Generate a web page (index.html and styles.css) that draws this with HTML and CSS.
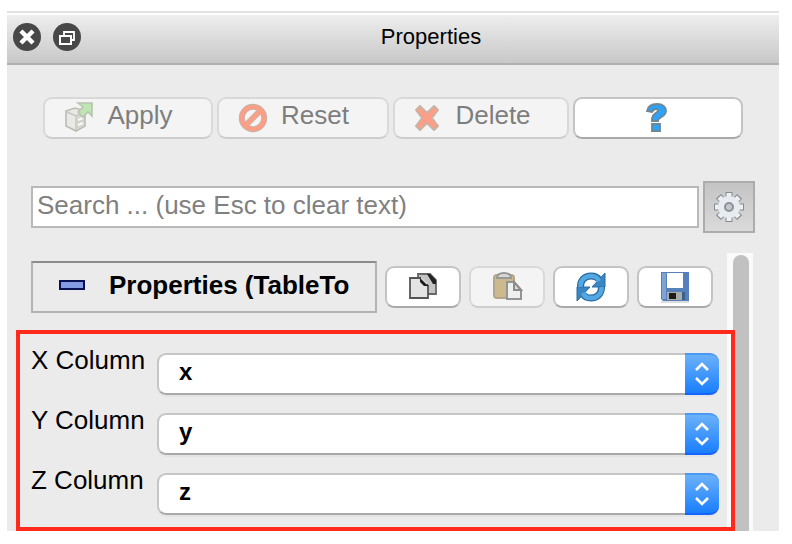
FILE: index.html
```html
<!DOCTYPE html>
<html lang="en">
<head>
<meta charset="utf-8">
<title>Properties</title>
<link rel="stylesheet" href="styles.css">
</head>
<body>
<main class="panel">
  <header class="titlebar">
    <button class="round" type="button" aria-label="Close">
      <svg width="28" height="28" viewBox="0 0 28 28"><circle cx="14" cy="14" r="14" fill="#484848"/><path d="M9.500 9.500l9 9M18.500 9.500l-9 9" stroke="#fff" stroke-width="4.400" stroke-linecap="square"/></svg>
    </button>
    <button class="round" type="button" aria-label="Detach">
      <svg width="28" height="28" viewBox="0 0 28 28" fill="none" stroke="#fff"><circle cx="14" cy="14" r="14" fill="#484848" stroke="none"/><path d="M11 12V9h10v8h-3" stroke-width="1.800"/><path d="M7 13h11v8H7z" stroke-width="2"/></svg>
    </button>
    <h1 class="title">Properties</h1>
  </header>

  <div class="actions">
    <button class="button action" type="button" disabled>
      <svg width="32" height="32" viewBox="0 0 32 32"><path d="M3 10l9-3 10 3v15l-9 5-10-5z" fill="#e9e9e5" stroke="#bbbcb4" stroke-width="1.600"/><path d="M4 11l9 4 9-4M13 15v14" fill="none" stroke="#c5c6be" stroke-width="1.500"/><path d="M14 16l7-4v12l-7 4z" fill="#d2d3cc"/><path d="M15 19l5-2M15 24l5-2" stroke="#fafaf7" stroke-width="2"/><path d="M15 2h14v13l-4-4-5 5-5-5 5-5z" fill="#bfe6b0" stroke="#b9c4b2" stroke-width="1.600"/></svg>
      <span class="label">Apply</span>
    </button>
    <button class="button action" type="button" disabled>
      <svg width="32" height="32" viewBox="0 0 32 32" fill="none"><circle cx="16" cy="17" r="11.200" stroke="#c9b2a2" stroke-width="6"/><path d="M9 24L23 10" stroke="#c9b2a2" stroke-width="6"/><circle cx="16" cy="17" r="11.200" stroke="#ff9d87" stroke-width="3.800"/><path d="M9 24L23 10" stroke="#ff9d87" stroke-width="3.800"/></svg>
      <span class="label">Reset</span>
    </button>
    <button class="button action" type="button" disabled>
      <svg width="32" height="32" viewBox="0 0 32 32"><path d="M5 9l4-4 7 7 7-7 4 4-6 8 6 8-4 4-7-7-7 7-4-4 6-8z" fill="#ff9d87" stroke="#c8b4a5" stroke-width="2" stroke-linejoin="round"/></svg>
      <span class="label">Delete</span>
    </button>
    <button class="button action" type="button" aria-label="Help">
      <svg width="32" height="32" viewBox="0 0 32 32"><path d="M7 10C8 5 11 3 17 3c6 0 9 3 9 7 0 4-3 5-6 7-1 1-2 1-2 3h-6v-3c0-3 3-4 5-6 2-1 1-3-1-3s-3 1-4 3z" fill="#2ba3fa" stroke="#6e8793" stroke-width="1.800"/><path d="M12 23h8v7h-8z" fill="#2ba3fa" stroke="#6e8793" stroke-width="1.800"/></svg>
    </button>
  </div>

  <div class="search">
    <input class="search-box" type="text" aria-label="Search" placeholder="Search ... (use Esc to clear text)">
    <button class="gear" type="button" aria-label="Advanced properties">
      <svg width="34" height="34" viewBox="0 0 34 34"><g stroke="#858b91" stroke-width="7"><path d="M17 2v30M2 17h30M6.400 6.400l21.200 21.200M27.600 6.400L6.400 27.600"/></g><g stroke="#edf0f4" stroke-width="5"><path d="M17 3v28M3 17h28M7.200 7.200l19.600 19.600M26.800 7.200L7.200 26.800"/></g><circle cx="17" cy="17" r="11" fill="#e8ecf1"/><circle cx="17" cy="17" r="4" fill="#c4c7ca" stroke="#8b9198" stroke-width="2"/></svg>
    </button>
  </div>

  <div class="scroll-area">
    <div class="content">
      <div class="group">
        <button class="group-toggle" type="button" aria-expanded="true">
          <svg width="26" height="10" viewBox="0 0 26 10"><path d="M1 1h24v8H1z" fill="#849be4" stroke="#0a1050" stroke-width="2"/></svg>
          <span class="group-name">Properties (TableTo</span>
        </button>
        <button class="button tool" type="button" aria-label="Copy">
          <svg width="32" height="32" viewBox="0 0 32 32"><path d="M11 3h12l6 6v14H11z" fill="#c4c4c4" stroke="#666" stroke-width="1.800"/><path d="M20 3h3l6 6v4h-3z" fill="#222"/><path d="M3 7h10l8 8v12H3z" fill="#e4e4e4" stroke="#555" stroke-width="1.800"/><path d="M13 6l9 9h-5l-4-4z" fill="#1c1c1c"/><path d="M14 7l6 6" stroke="#ddd" stroke-width="1.200"/></svg>
        </button>
        <button class="button tool" type="button" aria-label="Paste" disabled>
          <svg width="32" height="32" viewBox="0 0 32 32"><rect x="3" y="4" width="20" height="23" rx="3" fill="#cdb98e" stroke="#b5a68b" stroke-width="2"/><path d="M6 7c0-4 3-5 7-5s7 1 7 5z" fill="#d8d8d8" stroke="#989898" stroke-width="2"/><path d="M16 11h7l7 8v9H16z" fill="#efefef" stroke="#949494" stroke-width="2"/><path d="M23 11v8h7z" fill="#ddd" stroke="#8c8c8c" stroke-width="2"/></svg>
        </button>
        <button class="button tool" type="button" aria-label="Restore defaults">
          <svg width="32" height="32" viewBox="0 0 32 32"><g fill="none" stroke="#2c6b9f" stroke-width="7"><path d="M5.500 17C5 9 10 5 16 5c4 0 7 2 8 4"/><path d="M26.500 15c.5 8-4.500 12-10.500 12-4 0-7-2-8-4"/></g><path d="M30 2v14H17zM2 30V16h13z" fill="#3a86c4" stroke="#2c6b9f"/><g fill="none" stroke="#51a8e2" stroke-width="4.500"><path d="M5.500 16C5 9 10 5 16 5c4 0 7 2 8 5"/><path d="M26.500 16c.5 7-4.500 11-10.500 11-4 0-7-2-8-5"/></g></svg>
        </button>
        <button class="button tool" type="button" aria-label="Save defaults">
          <svg width="32" height="32" viewBox="0 0 32 32"><path d="M2 30h28v2H2z" fill="#ddd"/><path d="M2 1h28v29H4l-2-2z" fill="#5580b9"/><path d="M3 2h4v26H3z" fill="#7fa3d2"/><path d="M8 2h16v15H8z" fill="#fff"/><path d="M8 21h15v8H8z" fill="#a8ada9"/><path d="M10 22h7v6h-7z" fill="#1d1d17"/><path d="M23 21h3v8h-3z" fill="#3c5f92"/></svg>
        </button>
      </div>

      <div class="field">
        <label class="field-name" for="x-column">X Column</label>
        <div class="combo">
          <select class="combo-box" id="x-column"><option>x</option><option>y</option><option>z</option></select>
          <span class="combo-arrows"><svg width="16" height="24" viewBox="0 0 16 24"><path d="M2 8l6-6 6 6M2 16l6 6 6-6"/></svg></span>
        </div>
      </div>
      <div class="field">
        <label class="field-name" for="y-column">Y Column</label>
        <div class="combo">
          <select class="combo-box" id="y-column"><option>y</option><option>x</option><option>z</option></select>
          <span class="combo-arrows"><svg width="16" height="24" viewBox="0 0 16 24"><path d="M2 8l6-6 6 6M2 16l6 6 6-6"/></svg></span>
        </div>
      </div>
      <div class="field">
        <label class="field-name" for="z-column">Z Column</label>
        <div class="combo">
          <select class="combo-box" id="z-column"><option>z</option><option>x</option><option>y</option></select>
          <span class="combo-arrows"><svg width="16" height="24" viewBox="0 0 16 24"><path d="M2 8l6-6 6 6M2 16l6 6 6-6"/></svg></span>
        </div>
      </div>
    </div>
    <div class="track"><div class="thumb"></div></div>
    <div class="highlight"></div>
  </div>
</main>
</body>
</html>
```

FILE: styles.css
```css
* {
  box-sizing: border-box;
}

body {
  margin: 0;
  padding: 11px 13px 13px 7px;
  background: #fff;
  color: #000;
  font-family: "Liberation Sans", Arial, sans-serif;
  font-size: 26px;
}

button,
input,
select {
  margin: 0;
  padding: 0;
  font: inherit;
}

svg {
  display: block;
  flex: none;
}

.panel {
  border-top: 2px solid #e2e2e2;
  background: #ebebeb;
}

.titlebar {
  display: grid;
  grid-template-columns: 28px 28px 1fr;
  column-gap: 12px;
  align-items: center;
  height: 52px;
  padding: 0 10px 4px 6px;
  border-top: 2px solid #fff;
  border-bottom: 2px solid #b0b0b0;
  background: linear-gradient(#eee, #c8c8c8);
}

.round {
  border: 0;
  border-radius: 50%;
  background: none;
}

.title {
  margin: 0;
  font-size: 22px;
  font-weight: normal;
  line-height: 24px;
  text-align: center;
}

.actions {
  display: grid;
  grid-template-columns: 170fr 172fr 176fr 170fr;
  gap: 4px;
  padding: 32px 36px 0;
}

.button {
  display: flex;
  align-items: center;
  justify-content: center;
  height: 42px;
  border: 2px solid #c4c4c4;
  border-bottom-color: #a8aaa8;
  border-radius: 9px;
  background: #fff;
}

.button:disabled {
  border-color: #d9d9d9;
  border-bottom-color: #cdcdcd;
  background: #f4f4f4;
  color: #7e7e7e;
}

.action {
  gap: 12px;
  padding: 0 20px 2px 0;
}

.action:last-child {
  padding-right: 4px;
}

.label {
  padding-bottom: 4px;
  line-height: 28px;
}

.search {
  display: flex;
  align-items: center;
  gap: 4px;
  padding: 42px 24px 20px;
}

.search-box {
  flex: 1;
  min-width: 0;
  height: 42px;
  padding: 0 4px 4px;
  border: 2px solid #b9b9b9;
  background: #fff;
}

.search-box::placeholder {
  color: #808080;
  opacity: 1;
}

.gear {
  display: flex;
  align-items: center;
  justify-content: center;
  width: 52px;
  height: 52px;
  border: 2px solid #acacac;
  background: linear-gradient(#c4c4c4, #dadada);
}

.scroll-area {
  position: relative;
  display: flex;
  padding-right: 26px;
}

.content {
  flex: 1;
  min-width: 0;
  padding: 8px 8px 16px 24px;
}

.group {
  display: flex;
  align-items: center;
  gap: 8px;
  margin-bottom: 40px;
  padding-right: 6px;
}

.group-toggle {
  display: flex;
  flex: 1;
  align-items: center;
  gap: 24px;
  min-width: 0;
  height: 52px;
  padding: 0 24px 4px 26px;
  border: 2px solid #b2b2b2;
  border-top-color: #8c8c8c;
  background: none;
  font-weight: bold;
}

.group-name {
  overflow: hidden;
  white-space: nowrap;
}

.tool {
  width: 76px;
}

.field {
  display: flex;
  justify-content: space-between;
  gap: 8px;
}

.field + .field {
  margin-top: 18px;
}

.field-name {
  margin-top: -8px;
  line-height: 30px;
  white-space: nowrap;
}

.combo {
  display: grid;
  flex: 0 1 562px;
  grid-template-columns: 1fr 34px;
  height: 42px;
  border-radius: 9px;
  box-shadow: 0 2px 0 #e4e4e4;
}

.combo-box {
  grid-area: 1 / 1 / 2 / 3;
  appearance: none;
  padding: 0 40px 6px 20px;
  border: 2px solid #c6c6c6;
  border-bottom-color: #a9a9a9;
  border-radius: 9px;
  background: #fff;
  color: #000;
  font-size: 24px;
  font-weight: bold;
}

.combo-arrows {
  display: grid;
  grid-area: 1 / 2;
  place-items: center;
  z-index: 1;
  border-top: 2px solid #4a9af5;
  border-bottom: 2px solid #1464ff;
  border-radius: 0 9px 9px 0;
  background: linear-gradient(#6bb1f9, #1a7eff);
  pointer-events: none;
}

.combo-arrows svg {
  fill: none;
  stroke: #fff;
  stroke-width: 2.6;
}

.track {
  width: 26px;
  padding: 2px 4px 0 6px;
  background: #fafafa;
}

.thumb {
  height: 100%;
  border-radius: 8px 8px 0 0;
  background: #c1c1c1;
}

.highlight {
  position: absolute;
  inset: 77px 44px 0 9px;
  border: 4px solid #ff2a1c;
  pointer-events: none;
}
```
